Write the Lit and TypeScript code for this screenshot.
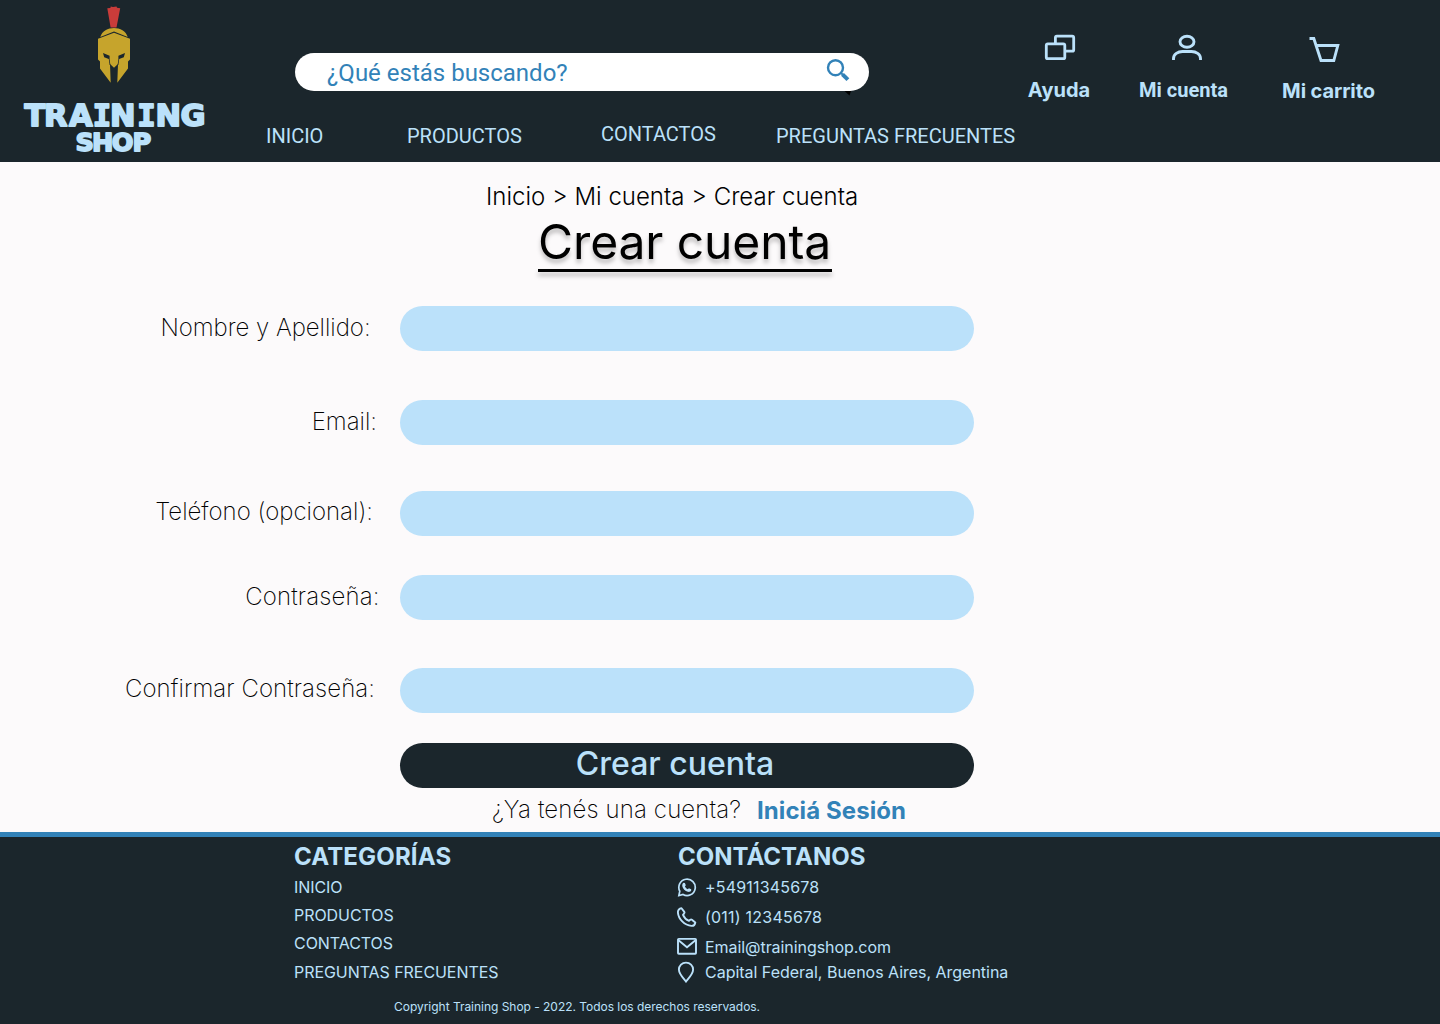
import { LitElement, html, css, svg } from "lit";
import { customElement } from "lit/decorators.js";

const helmet = svg`
  <path fill="#c93c3a" d="M27.3 8.2 30.4 8 30.7 6.4 33 6.9 36.5 6.4 37 7.8 40.2 8.2 36.5 27.6H30.6Z"/>
  <path fill="#c6a42c" d="M20.300 37C22 31 28 28 34 28S46 31 47.700 37L34 31.500Z"/>
  <path fill="#c6a42c" d="M18 38.800 34 32.800 50 38.800V59.500L48 61.500V68.500L37.300 82.800 38 64 34 67.800 30 64 30.700 82.800 20 68.500V61.500L18 59.500Z"/>
  <path fill="#1b262c" d="M23 53 29.600 55.700V59.500L30.400 65H29.600L28.800 59 24.200 57.300ZM45 53 38.400 55.700V59.500L37.600 65H38.400L39.200 59 43.800 57.300Z"/>`;

@customElement("app-root")
export class AppRoot extends LitElement {
  static styles = css`
    :host {
      display: block;
      width: 1440px;
      height: 1024px;
      background: #fcfafb;
      font-family: Inter, "Liberation Sans", sans-serif;
      color: #000;
      overflow: hidden;
      --dark: #1b262c;
      --sky: #bbe1fa;
      --blue: #3282b8;
    }
    * { box-sizing: border-box; }
    a { color: inherit; text-decoration: none; }
    svg { display: block; flex: none; }
    .line { fill: none; stroke: var(--sky); }

    header {
      display: flex;
      height: 162px;
      background: var(--dark);
      color: var(--sky);
    }
    .brand { width: 266px; flex: none; }
    .wordmark {
      font-family: "DejaVu Sans", sans-serif;
      font-weight: 700;
      fill: var(--sky);
      stroke: var(--sky);
      stroke-width: 1.8px;
      stroke-linejoin: round;
    }
    .slab { font-family: "DejaVu Sans Mono", monospace; }
    .middle { width: 762px; flex: none; padding-top: 53px; font-family: Roboto, sans-serif; }
    .search {
      display: flex;
      justify-content: space-between;
      width: 574px;
      height: 38px;
      margin-left: 29px;
      padding-left: 32px;
      border-radius: 19px;
      background: #fff;
      color: var(--blue);
      font-size: 24px;
      line-height: 40px;
    }
    .glass { margin-right: 17px; overflow: visible; }
    nav { display: flex; margin-top: 33px; font-size: 20px; line-height: 24px; }
    nav a { white-space: nowrap; }
    .n1 { width: 141px; }
    .n2 { width: 194px; }
    .n3 { width: 175px; margin-top: -2px; }
    .actions { display: flex; font-weight: 700; font-size: 20px; line-height: 24px; white-space: nowrap; }
    .action { display: flex; flex-direction: column; align-items: center; padding-top: 33px; }
    .action span { margin-top: 15px; }
    .help { width: 62px; }
    .help svg { margin-left: 2px; }
    .account { width: 89px; margin-left: 49px; font-family: Roboto, sans-serif; }
    .account svg { margin-left: 6px; }
    .cart { width: 93px; margin-left: 54px; letter-spacing: -0.1px; }
    .action.cart { padding-top: 34px; }
    .cart svg { margin-right: 7px; }

    main { height: 670px; padding-top: 20px; }
    .crumbs { margin-left: 486px; font-size: 24px; line-height: 29px; font-weight: 300; }
    h1 {
      width: 293.5px;
      height: 61px;
      margin: 0 0 0 538px;
      font-size: 48px;
      line-height: 62px;
      letter-spacing: -0.1px;
      font-weight: 400;
      white-space: nowrap;
      filter: drop-shadow(0 4px 2px rgba(0, 0, 0, 0.25));
      border-bottom: 3px solid #000;
    }
    form { margin-top: 34px; }
    .row { display: flex; align-items: center; height: 45px; margin-bottom: 49px; }
    .row label {
      width: 400px;
      text-align: right;
      font-size: 24px;
      line-height: 29px;
      font-weight: 200;
      white-space: nowrap;
    }
    .name label { padding: 0 29.5px 2px 0; letter-spacing: -0.03px; }
    .email { margin-bottom: 46px; }
    .email label { padding: 0 23px 2px 0; }
    .phone { margin-bottom: 39px; }
    .phone label { padding: 0 27px 4px 0; }
    .pass { margin-bottom: 48px; }
    .pass label { padding: 0 20.5px 3px 0; letter-spacing: 0.15px; }
    .confirm { margin-bottom: 30px; }
    .confirm label { padding: 0 25px 5px 0; letter-spacing: 0.08px; }
    input {
      width: 574px;
      height: 45px;
      padding: 0 22px;
      border: 0;
      border-radius: 22.5px;
      background: var(--sky);
      font: inherit;
    }
    .submit {
      display: block;
      width: 574px;
      height: 45px;
      margin-left: 400px;
      padding: 0 24px 4px 0;
      border: 0;
      border-radius: 22.5px;
      background: var(--dark);
      color: var(--sky);
      font: 500 32px/39px Inter, sans-serif;
    }
    .login {
      display: flex;
      margin: 7px 0 0 492px;
      font-size: 24px;
      line-height: 29px;
      font-weight: 200;
      white-space: nowrap;
    }
    .login span { width: 265px; letter-spacing: 0.13px; }
    .login a { margin-top: 1px; font-weight: 700; color: var(--blue); letter-spacing: 0.08px; }

    footer {
      height: 192px;
      border-top: 5px solid var(--blue);
      background: var(--dark);
      color: var(--sky);
      padding-left: 294px;
      font-size: 16px;
    }
    .cols { display: flex; height: 160px; }
    .col { width: 384px; padding-top: 5px; white-space: nowrap; }
    h2 { margin: 0 0 6px; font-size: 24px; line-height: 29px; font-weight: 700; }
    .first h2 { letter-spacing: 0.15px; }
    .link { display: block; height: 28px; line-height: 20px; letter-spacing: -0.06px; }
    .last { margin-top: 1px; }
    .contact { display: flex; align-items: center; gap: 8px; height: 20px; margin-left: -1px; }
    .c1 { margin-bottom: 10px; letter-spacing: 0.18px; }
    .c2 { margin-bottom: 10px; letter-spacing: 0.22px; }
    .c3 { margin-bottom: 5px; letter-spacing: -0.06px; }
    .c4 { letter-spacing: -0.02px; }
    .copy { margin-left: 100px; font-size: 12px; line-height: 20px; letter-spacing: -0.03px; }
  `;

  render() {
    return html`
      <header>
        <a class="brand" href="#">
          <svg width="230" height="162" viewBox="0 0 230 162">
            <g transform="translate(80 0)">${helmet}</g>
            <text class="wordmark" y="126.200" font-size="30.500"><tspan x="24.500 44 69">TRA</tspan><tspan class="slab" x="92.800">I</tspan><tspan x="110">N</tspan><tspan class="slab" x="137.300">I</tspan><tspan x="155.500 180.500">NG</tspan></text>
            <text class="wordmark" y="151.200" font-size="25.500" x="75.500 92 111.700 132.500">SHOP</text>
          </svg>
        </a>
        <div class="middle">
          <div class="search">
            <span>¿Qué estás buscando?</span>
            <svg class="glass" width="25" height="38" viewBox="0 0 25 38" fill="none">
              <circle cx="8.500" cy="14.700" r="7.500" stroke="#3282b8" stroke-width="2.400"/>
              <path d="M13.800 19.800 15.800 21.700" stroke="#3282b8" stroke-width="2"/>
              <path d="M15.500 21.300 20.900 26.700" stroke="#3282b8" stroke-width="4"/>
              <path d="M17.500 38H24L22.500 42.500Z" fill="#000"/>
            </svg>
          </div>
          <nav>
            <a class="n1" href="#">INICIO</a><a class="n2" href="#">PRODUCTOS</a>
            <a class="n3" href="#">CONTACTOS</a><a href="#">PREGUNTAS FRECUENTES</a>
          </nav>
        </div>
        <div class="actions">
          <a class="action help" href="#">
            <svg width="32" height="30" viewBox="0 0 32 30"><g class="line" stroke-width="2.800">
              <rect x="2.300" y="10.800" width="18.500" height="14.900" rx="1.500"/>
              <path d="M11.400 10.800V4.700Q11.400 3.200 12.900 3.200H28.200Q29.700 3.200 29.700 4.700V16.700Q29.700 18.200 28.200 18.200H20.800"/></g></svg>
            <span>Ayuda</span>
          </a>
          <a class="action account" href="#">
            <svg width="32" height="30" viewBox="0 0 32 30"><g class="line" stroke-width="2.900">
              <ellipse cx="16" cy="8.800" rx="7" ry="5.500"/>
              <path d="M2.500 27V25.500C2.500 21 7 18.500 11.500 18.500H20.500C25 18.500 29.500 21 29.500 25.500V27"/></g></svg>
            <span>Mi cuenta</span>
          </a>
          <a class="action cart" href="#">
            <svg width="32" height="30" viewBox="0 0 32 30"><g class="line" stroke-width="2.900">
              <path d="M.500 4.500H4.800L12 26.500H24.800L28.800 11.500H7.500"/></g></svg>
            <span>Mi carrito</span>
          </a>
        </div>
      </header>
      <main>
        <div class="crumbs">Inicio &gt; Mi cuenta &gt; Crear cuenta</div>
        <h1>Crear cuenta</h1>
        <form>
          <div class="row name"><label for="name">Nombre y Apellido:</label><input id="name"></div>
          <div class="row email"><label for="email">Email:</label><input id="email" type="email"></div>
          <div class="row phone"><label for="phone">Teléfono (opcional):</label><input id="phone" type="tel"></div>
          <div class="row pass"><label for="pass">Contraseña:</label><input id="pass" type="password"></div>
          <div class="row confirm"><label for="confirm">Confirmar Contraseña:</label><input id="confirm" type="password"></div>
          <button class="submit" type="button">Crear cuenta</button>
        </form>
        <div class="login"><span>¿Ya tenés una cuenta?</span><a href="#">Iniciá Sesión</a></div>
      </main>
      <footer>
        <div class="cols">
          <div class="col first">
            <h2>CATEGORÍAS</h2>
            <a class="link" href="#">INICIO</a>
            <a class="link" href="#">PRODUCTOS</a>
            <a class="link" href="#">CONTACTOS</a>
            <a class="link last" href="#">PREGUNTAS FRECUENTES</a>
          </div>
          <div class="col">
            <h2>CONTÁCTANOS</h2>
            <div class="contact c1">
              <svg width="20" height="20" viewBox="0 0 20 20"><path class="line" stroke-width="1.700" d="M1.900 18.500 2.800 14.200A8.200 8.200 0 1 1 6 17.500Z"/>
                <path fill="#bbe1fa" d="M6.600 5.800 7.900 6 8.800 8.200 7.900 9.500C8.600 10.800 9.600 11.700 10.800 12.200L11.900 11.200 14.200 12.200V13.500C13.600 14.800 12.100 15.200 10.800 14.800 8.100 14.100 5.800 11.700 5.300 9.200 5.100 7.700 5.600 6.200 6.600 5.800Z"/></svg>
              <span>+54911345678</span>
            </div>
            <div class="contact c2">
              <svg width="20" height="20" viewBox="0 0 20 20"><path class="line" stroke-width="1.900" stroke-linejoin="round" d="M4.500 1.200 7.300 4.900Q7.800 5.700 7 6.600L6 7.800C7 10.300 9.300 12.700 12 13.800L13.300 12.700Q14.100 12.100 14.900 12.700L18.300 15.500C18 17.500 16.500 19 14.500 18.900 7.500 18.300 1.300 12 .9 5.300.900 3.300 2.500 1.700 4.500 1.200Z"/></svg>
              <span>(011) 12345678</span>
            </div>
            <div class="contact c3">
              <svg width="20" height="20" viewBox="0 0 20 20"><g class="line" stroke-width="1.900"><rect x="1" y="1.900" width="18" height="14.800" rx=".8"/><path d="M1.500 3.200 10 10.200 18.500 3.200"/></g></svg>
              <span>Email@trainingshop.com</span>
            </div>
            <div class="contact c4">
              <svg width="20" height="22" viewBox="0 0 20 22"><path class="line" stroke-width="1.900" d="M9 20.500C5.500 16.500 1.900 13 1.900 8.600 1.900 4.500 5 1.600 9 1.600S16.100 4.500 16.100 8.600C16.100 13 12.500 16.500 9 20.500Z"/></svg>
              <span>Capital Federal, Buenos Aires, Argentina</span>
            </div>
          </div>
        </div>
        <div class="copy">Copyright Training Shop - 2022. Todos los derechos reservados.</div>
      </footer>
    `;
  }
}
